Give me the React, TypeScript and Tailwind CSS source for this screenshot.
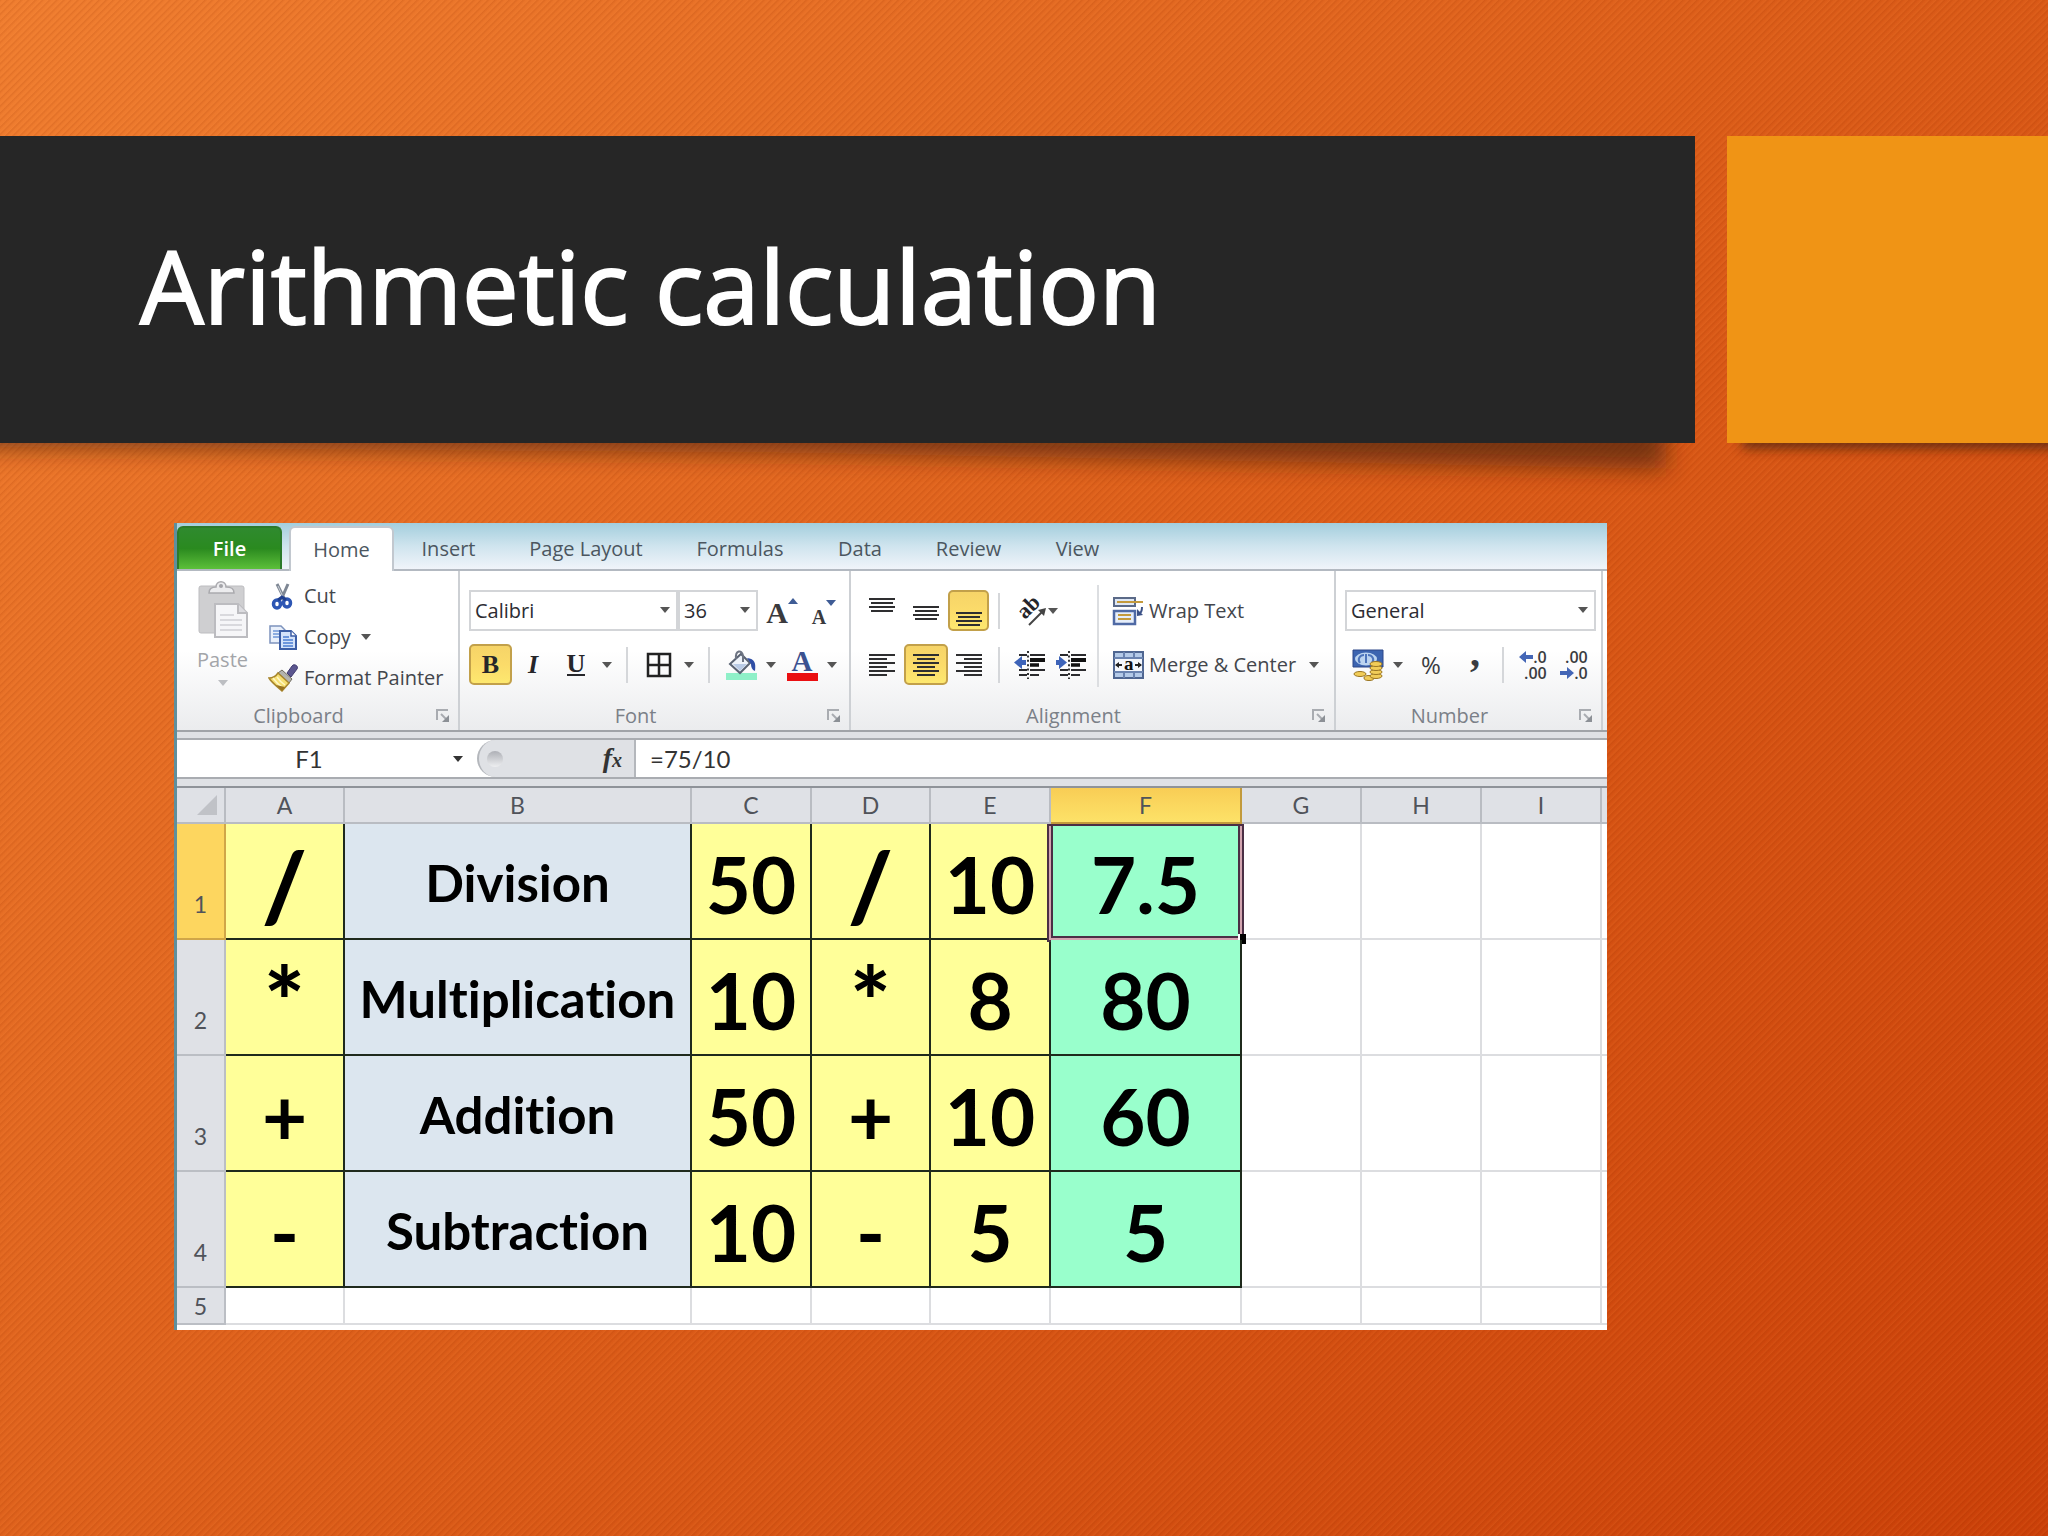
import type { ReactNode } from "react"
import { clsx } from "clsx"

const tabs = [
  { name: "Insert", width: "w-[109px]" },
  { name: "Page Layout", width: "w-[166px]" },
  { name: "Formulas", width: "w-[142px]" },
  { name: "Data", width: "w-[98px]" },
  { name: "Review", width: "w-[119px]" },
  { name: "View", width: "w-[99px]" },
]

const columns = ["A", "B", "C", "D", "E", "F", "G", "H", "I"]

const rows = [
  { sign: "/", name: "Division", left: "50", right: "10", result: "7.5" },
  { sign: "*", name: "Multiplication", left: "10", right: "8", result: "80" },
  { sign: "+", name: "Addition", left: "50", right: "10", result: "60" },
  { sign: "-", name: "Subtraction", left: "10", right: "5", result: "5" },
]

function Caret({ className = "fill-[#555]" }: { className?: string }) {
  return (
    <svg viewBox="0 0 10 6" className={clsx("h-[6px] w-[10px] shrink-0", className)}>
      <path d="M0 0h10L5 6z" />
    </svg>
  )
}

function Tool({
  label,
  width,
  active = false,
  children,
}: {
  label: string
  width: string
  active?: boolean
  children: ReactNode
}) {
  return (
    <button
      type="button"
      aria-label={label}
      className={clsx(
        "flex h-[41px] shrink-0 items-center justify-center rounded-[5px]",
        width,
        active &&
          "border-2 border-[#c2a04a] bg-linear-to-b from-[#f6d468] via-[#fbdb6a] to-[#fde86f]"
      )}
    >
      {children}
    </button>
  )
}

function Separator({ width }: { width: string }) {
  return (
    <div className={clsx("flex h-[36px] shrink-0 justify-center", width)}>
      <div className="w-[2px] bg-[#d5d7da]" />
    </div>
  )
}

function Group({
  name,
  width,
  children,
}: {
  name: string
  width: string
  children: ReactNode
}) {
  return (
    <section
      aria-label={name}
      className={clsx(
        "flex shrink-0 flex-col border-r-2 border-[#cdd0d4]",
        width
      )}
    >
      <div className="flex h-[131px] items-start">{children}</div>
      <div className="flex h-[28px] items-center pr-2">
        <span className="flex-1 pr-4 text-center text-[20px] leading-6 text-[#7b8088]">
          {name}
        </span>
        <button type="button" aria-label={`${name} settings`}>
          <svg viewBox="0 0 14 14" className="h-[14px] w-[14px]" fill="none" stroke="#a9acb1" strokeWidth="2">
            <path d="M1 11V1h11" />
            <path d="M5 5l6 6" />
            <path d="M13 6v7H6z" fill="#8c9096" stroke="none" />
          </svg>
        </button>
      </div>
    </section>
  )
}

function Picker({
  label,
  value,
  width,
}: {
  label: string
  value: string
  width: string
}) {
  return (
    <div className={clsx("relative shrink-0", width)}>
      <select
        aria-label={label}
        defaultValue={value}
        className="h-[41px] w-full appearance-none border-2 border-[#d3d5d8] bg-white pl-1 text-[20px] text-[#2c2c33] outline-none"
      >
        <option>{value}</option>
      </select>
      <span className="pointer-events-none absolute top-[17px] right-[8px]">
        <Caret />
      </span>
    </div>
  )
}

function PasteIcon() {
  return (
    <svg viewBox="0 0 50 58" className="h-[58px] w-[50px]">
      <rect x="1" y="5" width="45" height="47" rx="2" fill="#cfcfd1" />
      <rect x="1" y="5" width="45" height="47" rx="2" fill="none" stroke="#bdbdc0" />
      <path d="M11 12c0-5 3-6 7-6 0-7 10-7 10 0 5 0 8 1 8 6z" fill="#ececee" stroke="#aaaaae" strokeWidth="1.5" />
      <circle cx="23" cy="5" r="2" fill="#a5a5a9" />
      <path d="M17 23h23l9 9v24H17z" fill="#f6f6f8" stroke="#bcbcc0" strokeWidth="2" />
      <path d="M40 23v9h9" fill="#dcdce0" stroke="#bcbcc0" strokeWidth="2" />
      <path d="M22 34h14M22 39h22M22 44h22M22 49h22" stroke="#d9d9dd" strokeWidth="2" />
    </svg>
  )
}

function CutIcon() {
  return (
    <svg viewBox="0 0 30 28" className="h-[28px] w-[30px]" fill="none">
      <path d="M9 2l8 16M20 2l-7 16" stroke="#7e8794" strokeWidth="3" />
      <path d="M10 4l5 11" stroke="#c8ced6" strokeWidth="1" />
      <ellipse cx="9" cy="22" rx="3.5" ry="4" stroke="#2d56b4" strokeWidth="3.5" />
      <ellipse cx="19" cy="21" rx="3.5" ry="4" stroke="#2d56b4" strokeWidth="3.5" />
      <path d="M10 18l4-3 4 3" stroke="#1f3f90" strokeWidth="3" />
    </svg>
  )
}

function CopyIcon() {
  return (
    <svg viewBox="0 0 30 28" className="h-[28px] w-[30px]">
      <path d="M2 3h11l4 4v13H2z" fill="#e9f0fb" stroke="#7d93bd" strokeWidth="1.5" />
      <path d="M5 8h7M5 11h8M5 14h8" stroke="#6f96d8" strokeWidth="1.5" />
      <path d="M12 8h11l5 5v13H12z" fill="#d3e2fa" stroke="#3c5ea6" strokeWidth="2" />
      <path d="M23 8v5h5" fill="#fff" stroke="#3c5ea6" strokeWidth="1.5" />
      <path d="M15 14h6M15 17h10M15 20h10M15 23h10" stroke="#4b7dd2" strokeWidth="1.5" />
    </svg>
  )
}

function PainterIcon() {
  return (
    <svg viewBox="0 0 30 28" className="h-[28px] w-[30px]">
      <path d="M19 9l5-7c2-3 7 0 5 3l-6 8z" fill="#5b568f" stroke="#413c70" />
      <path d="M14 6l10 9-3 4L10 9z" fill="#b3b3ae" stroke="#6f6a5c" />
      <path d="M10 9l11 10-7 8C10 23 4 19 1 14c4 0 7-2 9-5z" fill="#f6df72" stroke="#a8862c" strokeWidth="1.5" />
      <path d="M5 14c3 4 6 7 9 9M9 13c2 3 5 6 8 8" stroke="#fff7c4" strokeWidth="1.5" fill="none" />
      <path d="M8 21l6 6 3-4z" fill="#9a7420" />
    </svg>
  )
}

function Lines({ d }: { d: string }) {
  return (
    <svg viewBox="0 0 28 32" className="h-[32px] w-[28px]" stroke="#2e2e30" strokeWidth="2.2">
      <path d={d} />
    </svg>
  )
}

function BordersIcon() {
  return (
    <svg viewBox="0 0 26 26" className="h-[26px] w-[26px]" fill="none" stroke="#222" strokeWidth="2.5">
      <path d="M2 2h22v22H2zM13 2v22M2 13h22" />
    </svg>
  )
}

function FillIcon() {
  return (
    <svg viewBox="0 0 32 32" className="h-[32px] w-[32px]">
      <path d="M1 24h31v7H1z" fill="#8ff0c8" />
      <path d="M5 15L16 5l9 9-10 10z" fill="#eef3fa" stroke="#5a6373" strokeWidth="2" />
      <path d="M11 10c-1-9 6-10 7-3v6" fill="none" stroke="#6d7482" strokeWidth="2" />
      <path d="M8 15h14l-7 7z" fill="#b9cbe6" />
      <path d="M22 9c8 1 9 5 8 13-3-1-4-4-4-7z" fill="#2f4ea5" />
    </svg>
  )
}

function FontColorIcon() {
  return (
    <span className="flex h-[32px] w-[32px] flex-col items-center">
      <span className="h-[24px] font-['Liberation_Serif',serif] text-[29px] leading-[24px] font-bold text-[#3b5190]">
        A
      </span>
      <span className="h-[8px] w-[31px] bg-[#ea0f12]" />
    </span>
  )
}

function OrientationIcon() {
  return (
    <svg viewBox="0 0 32 32" className="h-[32px] w-[32px] overflow-visible">
      <text
        x="9"
        y="25"
        transform="rotate(-45 9 25)"
        fill="#26262a"
        className="font-['Liberation_Serif',serif] text-[22px] font-bold"
      >
        ab
      </text>
      <path d="M13 30l13-13" stroke="#444" strokeWidth="2" />
      <path d="M30 13l-2 8-6-6z" fill="#444" />
    </svg>
  )
}

function IndentIcon({ increase = false }: { increase?: boolean }) {
  return (
    <svg viewBox="0 0 32 30" className="h-[30px] w-[32px]">
      <path d="M5 5h8M16 5h15M5 20h8M16 20h15M5 25h8M16 25h9" stroke="#2b2b2e" strokeWidth="2.2" />
      <path d="M16 10h15" stroke="#111" strokeWidth="4" />
      <path d="M16 15h9" stroke="#111" strokeWidth="3.5" />
      <path d="M14 1v28" stroke="#333" strokeWidth="2" strokeDasharray="2 2.4" />
      {increase ? (
        <path d="M12 12.500L4 6v4H1v5h3v4z" fill="#3d63b8" />
      ) : (
        <path d="M0 12.500L8 6v4h4v5H8v4z" fill="#3d63b8" />
      )}
    </svg>
  )
}

function WrapIcon() {
  return (
    <svg viewBox="0 0 32 30" className="h-[30px] w-[32px]">
      <path d="M2 2h21v8H2z" fill="#dfe8f6" stroke="#5b6a88" strokeWidth="2" />
      <path d="M5 6h26" stroke="#c49a3c" strokeWidth="2" />
      <path d="M2 15h21v13H2z" fill="#e6eefa" stroke="#4f6aa5" strokeWidth="2.5" />
      <path d="M6 19h13M6 23h13" stroke="#c49a3c" strokeWidth="2" />
      <path d="M30 11c0 4-1 6-3 7" fill="none" stroke="#3c5287" strokeWidth="2" />
      <path d="M25 20v-7l6 6z" fill="#3c5287" />
    </svg>
  )
}

function MergeIcon() {
  return (
    <svg viewBox="0 0 32 30" className="h-[30px] w-[32px]">
      <path d="M2 2h29v26H2z" fill="#b4cae8" stroke="#4f6691" strokeWidth="2" />
      <path d="M12 2v6M22 2v6M12 22v6M22 22v6M2 8h29M2 22h29" stroke="#6a83b0" strokeWidth="2" />
      <path d="M3 9h27v12H3z" fill="#f4f7fc" />
      <text x="12" y="20" fill="#111" className="font-['Liberation_Serif',serif] text-[19px] font-bold">
        a
      </text>
      <path d="M4 15h6M23 15h6" stroke="#222" strokeWidth="2" />
      <path d="M3 15l4-3v6zM30 15l-4-3v6z" fill="#222" />
    </svg>
  )
}

function CurrencyIcon() {
  return (
    <svg viewBox="0 0 32 32" className="h-[32px] w-[32px]">
      <path d="M1 1h30v17H1z" fill="#3c64b0" stroke="#2c4788" />
      <ellipse cx="14" cy="10" rx="11" ry="6.500" fill="#bcd4f0" />
      <path d="M8 14c-3-4 0-8 4-8M20 14c3-4 0-8-4-8M14 5v9" fill="none" stroke="#4d74bb" strokeWidth="2" />
      <g fill="#f1cc58" stroke="#9a7521">
        <ellipse cx="8" cy="25" rx="6" ry="2.500" />
        <ellipse cx="17" cy="29" rx="5" ry="2.500" />
        <ellipse cx="24" cy="27" rx="6" ry="2.500" />
        <ellipse cx="24" cy="23" rx="6" ry="2.500" />
        <ellipse cx="24" cy="19" rx="6" ry="2.500" />
        <ellipse cx="24" cy="15" rx="6" ry="2.500" />
      </g>
    </svg>
  )
}

function BlueArrow({ right = false }: { right?: boolean }) {
  return (
    <svg viewBox="0 0 14 12" className="h-[12px] w-[14px]" fill="#4466b6">
      <path d={right ? "M14 6L7 0v4H0v4h7v4z" : "M0 6l7-6v4h7v4H7v4z"} />
    </svg>
  )
}

function ClipboardGroup() {
  return (
    <Group name="Clipboard" width="w-[283px]">
      <button
        type="button"
        className="flex w-[91px] flex-col items-center pt-[10px] text-[20px] leading-6 text-[#a3a5a9]"
      >
        <PasteIcon />
        <span className="mt-[9px]">Paste</span>
        <Caret className="mt-[8px] fill-[#bcbec2]" />
      </button>
      <div className="flex flex-col gap-[13px] pt-[11px] text-[20px] leading-7 text-[#43464c]">
        <button type="button" className="flex items-center gap-[6px]">
          <CutIcon />
          Cut
        </button>
        <button type="button" className="flex items-center gap-[6px]">
          <CopyIcon />
          Copy
          <Caret className="ml-1 fill-[#555]" />
        </button>
        <button type="button" className="flex items-center gap-[6px] whitespace-nowrap">
          <PainterIcon />
          Format Painter
        </button>
      </div>
    </Group>
  )
}

function FontGroup() {
  return (
    <Group name="Font" width="w-[391px]">
      <div className="flex flex-col gap-[13px] pt-[19px] pl-[9px]">
        <div className="flex">
          <Picker label="Font" value="Calibri" width="w-[209px]" />
          <Picker label="Font size" value="36" width="w-[80px]" />
          <Tool label="Increase font size" width="w-[48px]">
            <span className="mt-1 font-['Liberation_Serif',serif] text-[30px] leading-8 font-bold text-[#3a3a3d]">
              A
            </span>
            <Caret className="mb-5 rotate-180 fill-[#3f5c95]" />
          </Tool>
          <Tool label="Decrease font size" width="w-[36px]">
            <span className="mt-3 font-['Liberation_Serif',serif] text-[20px] leading-6 font-bold text-[#3a3a3d]">
              A
            </span>
            <Caret className="mb-4 fill-[#3f5c95]" />
          </Tool>
        </div>
        <div className="flex items-center font-['Liberation_Serif',serif] text-[26px] leading-7 text-[#26262a]">
          <Tool label="Bold" width="w-[43px]" active>
            <span className="font-bold">B</span>
          </Tool>
          <Tool label="Italic" width="w-[42px]">
            <span className="font-bold italic">I</span>
          </Tool>
          <Tool label="Underline" width="w-[44px]">
            <span className="border-b-2 border-[#26262a] leading-5 font-bold">U</span>
          </Tool>
          <Tool label="Underline styles" width="w-[17px]">
            <Caret />
          </Tool>
          <Separator width="w-[24px]" />
          <Tool label="Borders" width="w-[40px]">
            <BordersIcon />
          </Tool>
          <Tool label="Border styles" width="w-[20px]">
            <Caret />
          </Tool>
          <Separator width="w-[20px]" />
          <Tool label="Fill color" width="w-[44px]">
            <FillIcon />
          </Tool>
          <Tool label="Fill colors" width="w-[16px]">
            <Caret />
          </Tool>
          <Tool label="Font color" width="w-[46px]">
            <FontColorIcon />
          </Tool>
          <Tool label="Font colors" width="w-[14px]">
            <Caret />
          </Tool>
        </div>
      </div>
    </Group>
  )
}

function AlignmentGroup() {
  return (
    <Group name="Alignment" width="w-[485px]">
      <div className="flex flex-col gap-[13px] pt-[19px] pl-[9px]">
        <div className="flex items-center">
          <Tool label="Top align" width="w-[44px]">
            <Lines d="M1 4h26M3 8h22M1 12h26M3 16h22" />
          </Tool>
          <Tool label="Middle align" width="w-[44px]">
            <Lines d="M1 12h26M3 16h22M1 20h26M3 24h22" />
          </Tool>
          <Tool label="Bottom align" width="w-[41px]" active>
            <Lines d="M1 18h26M3 22h22M1 26h26M3 30h22" />
          </Tool>
          <Separator width="w-[20px]" />
          <Tool label="Orientation" width="w-[56px]">
            <OrientationIcon />
            <Caret />
          </Tool>
        </div>
        <div className="flex items-center">
          <Tool label="Align left" width="w-[44px]">
            <Lines d="M1 6h26M1 10h18M1 14h26M1 18h18M1 22h26M1 26h18" />
          </Tool>
          <Tool label="Center" width="w-[44px]" active>
            <Lines d="M1 6h26M5 10h18M1 14h26M5 18h18M1 22h26M5 26h18" />
          </Tool>
          <Tool label="Align right" width="w-[41px]">
            <Lines d="M1 6h26M9 10h18M1 14h26M9 18h18M1 22h26M9 26h18" />
          </Tool>
          <Separator width="w-[20px]" />
          <Tool label="Decrease indent" width="w-[41px]">
            <IndentIcon />
          </Tool>
          <Tool label="Increase indent" width="w-[41px]">
            <IndentIcon increase />
          </Tool>
        </div>
      </div>
      <div className="mt-[14px] ml-[6px] h-[102px] w-[2px] bg-[#dcdee1]" />
      <div className="flex flex-col gap-[13px] pt-[19px] pl-[13px] text-[20px] text-[#43464c]">
        <button type="button" className="flex h-[41px] items-center gap-[5px] whitespace-nowrap">
          <WrapIcon />
          Wrap Text
        </button>
        <button type="button" className="flex h-[41px] items-center gap-[5px] whitespace-nowrap">
          <MergeIcon />
          Merge &amp; Center
          <Caret className="ml-2 fill-[#555]" />
        </button>
      </div>
    </Group>
  )
}

function NumberGroup() {
  return (
    <Group name="Number" width="w-[267px]">
      <div className="flex flex-col gap-[13px] pt-[19px] pl-[9px]">
        <Picker label="Number format" value="General" width="w-[251px]" />
        <div className="flex items-center text-[#3a3c41]">
          <Tool label="Accounting format" width="w-[46px]">
            <CurrencyIcon />
          </Tool>
          <Tool label="Currencies" width="w-[14px]">
            <Caret />
          </Tool>
          <Tool label="Percent style" width="w-[52px]">
            <span className="text-[24px]">%</span>
          </Tool>
          <Tool label="Comma style" width="w-[36px]">
            <span className="pb-6 font-['Liberation_Serif',serif] text-[40px] leading-10 font-bold">,</span>
          </Tool>
          <Separator width="w-[20px]" />
          <Tool label="Increase decimal" width="w-[40px]">
            <span className="flex flex-col items-end text-[16px] leading-4 font-semibold">
              <span className="flex items-center">
                <BlueArrow />
                .0
              </span>
              <span>.00</span>
            </span>
          </Tool>
          <Tool label="Decrease decimal" width="w-[42px]">
            <span className="flex flex-col items-end text-[16px] leading-4 font-semibold">
              <span>.00</span>
              <span className="flex items-center">
                <BlueArrow right />
                .0
              </span>
            </span>
          </Tool>
        </div>
      </div>
    </Group>
  )
}

function FormulaBar() {
  return (
    <div className="flex h-[54px] flex-col bg-[#dfe1e5] pt-[6px]">
      <div className="flex h-[41px] border-y-2 border-[#a9acb1] bg-white font-[Lato,sans-serif] text-[24px] text-[#333]">
        <div className="flex w-[300px] items-center pr-[14px]">
          <input
            aria-label="Name box"
            defaultValue="F1"
            className="w-[264px] bg-transparent text-center outline-none"
          />
          <Caret className="ml-auto fill-[#333]" />
        </div>
        <div className="flex w-[159px] items-center justify-between rounded-l-full border-r-2 border-l-2 border-[#b4b7bc] bg-[#dfe1e5] pr-3 pl-2">
          <span className="h-[16px] w-[16px] rounded-full bg-linear-to-b from-[#aeb0b6] to-[#eeeff1]" />
          <button
            type="button"
            aria-label="Insert function"
            className="font-['Liberation_Serif',serif] text-[28px] leading-7 font-bold italic"
          >
            f<span className="text-[20px]">x</span>
          </button>
        </div>
        <input
          aria-label="Formula"
          defaultValue="=75/10"
          className="min-w-0 flex-1 bg-white pl-[14px] outline-none"
        />
      </div>
    </div>
  )
}

function Sheet() {
  const dark = "border-[#1f2a1c]"
  const light = "border-[#dcdde0]"

  return (
    <table className="w-full table-fixed border-separate border-spacing-0 border-t-2 border-[#8f9399] bg-white text-center font-[Lato,sans-serif] [font-variant-ligatures:none]">
      <colgroup>
        <col className="w-[49px]" />
        <col className="w-[119px]" />
        <col className="w-[347px]" />
        <col className="w-[120px]" />
        <col className="w-[119px]" />
        <col className="w-[120px]" />
        <col className="w-[191px]" />
        <col className="w-[120px]" />
        <col className="w-[120px]" />
        <col className="w-[120px]" />
        <col />
      </colgroup>
      <thead>
        <tr className="h-[36px] bg-[#dfe1e6] text-[23px] leading-7 text-[#50535a]">
          <th aria-label="Select all" className="border-r-2 border-b-2 border-[#b9bcc2]">
            <svg viewBox="0 0 20 20" className="ml-auto mr-[7px] h-[20px] w-[20px]">
              <path d="M20 0v20H0z" fill="#c0c2c7" />
            </svg>
          </th>
          {columns.map((column) => (
            <th
              key={column}
              scope="col"
              className={clsx(
                "border-r-2 border-b-2 font-normal",
                column === "F"
                  ? "border-[#c29a3c] bg-linear-to-b from-[#f8cd55] to-[#fde268]"
                  : "border-[#b9bcc2]"
              )}
            >
              {column}
            </th>
          ))}
          <th aria-hidden className="border-b-2 border-[#b9bcc2]" />
        </tr>
      </thead>
      <tbody className="text-[78px] leading-[80px] font-bold text-black">
        {rows.map((row, index) => {
          const tall = row.sign === "/" || row.sign === "*"
          const valueCell = clsx("border-r-2 border-b-2 bg-[#ffff99] pt-[6px]", dark)
          const signCell = clsx(valueCell, tall && "text-[96px] font-black")

          return (
            <tr key={row.name} className="h-[116px]">
              <th
                scope="row"
                className={clsx(
                  "border-r-2 border-b-2 pb-[20px] align-bottom text-[23px] leading-7 font-normal text-[#50535a]",
                  index === 0
                    ? "border-[#d0a648] bg-[#fdd65f]"
                    : "border-[#bbbec4] bg-[#dfe1e6]"
                )}
              >
                {index + 1}
              </th>
              <td className={signCell}>{row.sign}</td>
              <td className={clsx("border-r-2 border-b-2 bg-[#dce6ef] pt-[3px] text-[51px]", dark)}>
                {row.name}
              </td>
              <td className={valueCell}>{row.left}</td>
              <td className={signCell}>{row.sign}</td>
              <td className={valueCell}>{row.right}</td>
              <td className={clsx("relative border-r-2 border-b-2 bg-[#99ffcc] pt-[6px]", dark)}>
                {row.result}
                {index === 0 && (
                  <span className="absolute -inset-x-1 top-0 -bottom-1 border-2 border-[#4b2f45]">
                    <span className="absolute inset-0 border-2 border-t-0 border-[#d3a5b0]" />
                    <span className="absolute inset-x-[2px] top-0 bottom-[2px] border-2 border-t-0 border-[#4b2f45]" />
                    <span className="absolute -right-1 -bottom-1 h-[10px] w-[8px] border-l-2 border-white bg-black" />
                  </span>
                )}
              </td>
              <td className={clsx("border-r-2 border-b-2", light)} />
              <td className={clsx("border-r-2 border-b-2", light)} />
              <td className={clsx("border-r-2 border-b-2", light)} />
              <td className={clsx("border-b-2", light)} />
            </tr>
          )
        })}
        <tr className="h-[37px] text-[23px] leading-7">
          <th scope="row" className="border-r-2 border-b-2 border-[#bbbec4] bg-[#dfe1e6] font-normal text-[#50535a]">
            5
          </th>
          {columns.map((column) => (
            <td key={column} className={clsx("border-r-2 border-b-2", light)} />
          ))}
          <td className={clsx("border-b-2", light)} />
        </tr>
      </tbody>
    </table>
  )
}

function Spreadsheet() {
  return (
    <div className="overflow-hidden border-l-3 border-[#5f8f9c] bg-white pb-[5px] font-['Open_Sans',sans-serif]">
      <nav className="flex h-[48px] items-end border-b-2 border-[#b3b9c1] bg-linear-to-b from-[#a3cedd] via-[#cfe4ee] to-[#f0f4fa] text-[20px] leading-6 text-[#4b5660]">
        <button
          type="button"
          className="h-[43px] w-[105px] rounded-t-[6px] border-2 border-b-0 border-[#2c7a2b] bg-linear-to-b from-[#2f8a2e] via-[#2a8a1f] to-[#5cc03a] font-semibold text-white"
        >
          File
        </button>
        <button
          type="button"
          className="-mb-[2px] ml-[7px] h-[45px] w-[105px] rounded-t-[6px] border-2 border-b-0 border-[#c2c8cf] bg-white"
        >
          Home
        </button>
        {tabs.map((tab) => (
          <button
            key={tab.name}
            type="button"
            className={clsx("h-[43px] shrink-0 pt-[2px] whitespace-nowrap", tab.width)}
          >
            {tab.name}
          </button>
        ))}
      </nav>
      <div className="flex border-b-2 border-[#a0a3a8] bg-linear-to-b from-white from-50% to-[#ebecee]">
        <ClipboardGroup />
        <FontGroup />
        <AlignmentGroup />
        <NumberGroup />
      </div>
      <FormulaBar />
      <Sheet />
    </div>
  )
}

export default function App() {
  return (
    <main className="min-h-screen overflow-hidden bg-[repeating-linear-gradient(135deg,rgba(150,50,0,0.14)_0px,rgba(150,50,0,0)_2px,rgba(255,150,70,0.1)_4px,rgba(150,50,0,0.14)_5px),linear-gradient(135deg,#f07e30_0%,#dc5d19_50%,#ca3f08_100%)] pt-[136px]">
      <header className="relative flex h-[307px] gap-[32px]">
        <svg
          viewBox="0 0 2048 100"
          preserveAspectRatio="none"
          className="absolute top-full left-0 h-[100px] w-full"
        >
          <defs>
            <filter id="soft" x="-5%" y="-100%" width="110%" height="300%">
              <feGaussianBlur stdDeviation="12" />
            </filter>
            <filter id="tight" x="-5%" y="-100%" width="110%" height="300%">
              <feGaussianBlur stdDeviation="6" />
            </filter>
          </defs>
          <path d="M-40 -40H1666V26L800 10L-40 4z" fill="#3a1c08" opacity="0.62" filter="url(#soft)" />
          <path d="M1742 -30H2100V6H1742z" fill="#3a1c08" opacity="0.65" filter="url(#tight)" />
        </svg>
        <div className="relative flex flex-1 items-center bg-[#262626] pb-[10px] pl-[140px]">
          <h1 className="font-['Open_Sans',sans-serif] text-[101px] leading-[120px] whitespace-nowrap text-white [-webkit-text-stroke:2px_white]">
            Arithmetic calculation
          </h1>
        </div>
        <div className="relative w-[321px] bg-[#f09415]" />
      </header>
      <div className="pt-[80px] pr-[441px] pb-12 pl-[174px]">
        <Spreadsheet />
      </div>
    </main>
  )
}
